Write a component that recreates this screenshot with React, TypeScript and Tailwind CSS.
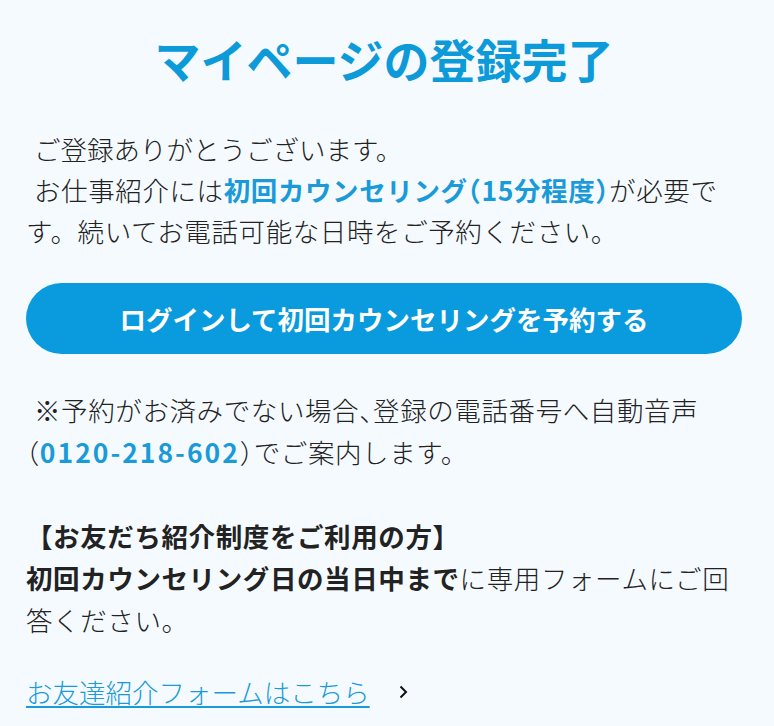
import React from 'react';

const font = { fontFamily: '"Noto Sans CJK JP", "Noto Sans", sans-serif' };

// half-width punctuation, as the brackets sit tight in the design
const Half: React.FC<{ children: React.ReactNode }> = ({ children }) => (
  <span className="[font-feature-settings:'halt']">{children}</span>
);

const App: React.FC = () => {
  return (
    <div className="min-h-screen bg-[#f5faff] pl-[26px] pr-[32px] pt-[26px] pb-10 text-[#222]" style={font}>
      <h1 className="text-center text-[46px] font-bold leading-[64px] text-[#0d9ad9]">
        マイページの登録完了
      </h1>

      {/* Intro */}
      <div className="mt-[38px] text-[26.5px] font-light leading-[41px]">
        <p className="indent-[8px]">ご登録ありがとうございます。</p>
        <p className="indent-[8px] tracking-[0.6px]">
          お仕事紹介には
          <span className="font-bold text-[#1a9bd8]">
            初回カウンセリング<Half>（</Half>15分程度<Half>）</Half>
          </span>
          が必要です。続いてお電話可能な日時をご予約ください。
        </p>
      </div>

      <button className="mt-[32px] flex h-[71px] w-full items-center justify-center rounded-full bg-[#0a9ade] text-[26.5px] font-bold text-white">
        ログインして初回カウンセリングを予約する
      </button>

      <p className="mt-[35px] indent-[8px] text-[26.5px] font-light leading-[42px] tracking-[0.6px]">
        ※予約がお済みでない場合<Half>、</Half>登録の電話番号へ自動音声<Half>（</Half>
        <span className="font-bold tracking-[2px] text-[#1a9bd8]">0120-218-602</span>
        <Half>）</Half>でご案内します。
      </p>

      {/* Referral */}
      <div className="mt-[42px] text-[26.5px] font-light leading-[42px] tracking-[0.6px]">
        <p className="font-bold">【お友だち紹介制度をご利用の方】</p>
        <p>
          <span className="font-bold">初回カウンセリング日の当日中まで</span>
          に専用フォームにご回答ください。
        </p>
      </div>

      <div className="mt-[30px] flex items-center gap-[28px] text-[26.5px] font-light leading-[42px]">
        <a href="#" className="text-[#1a9bd8] underline decoration-2 underline-offset-[3px]">
          お友達紹介フォームはこちら
        </a>
        <svg width="10" height="16" viewBox="0 0 10 16" fill="none" stroke="#111" strokeWidth="2">
          <path d="M2.5 2.5l5.5 5.5-5.5 5.5" />
        </svg>
      </div>
    </div>
  );
};

export default App;
